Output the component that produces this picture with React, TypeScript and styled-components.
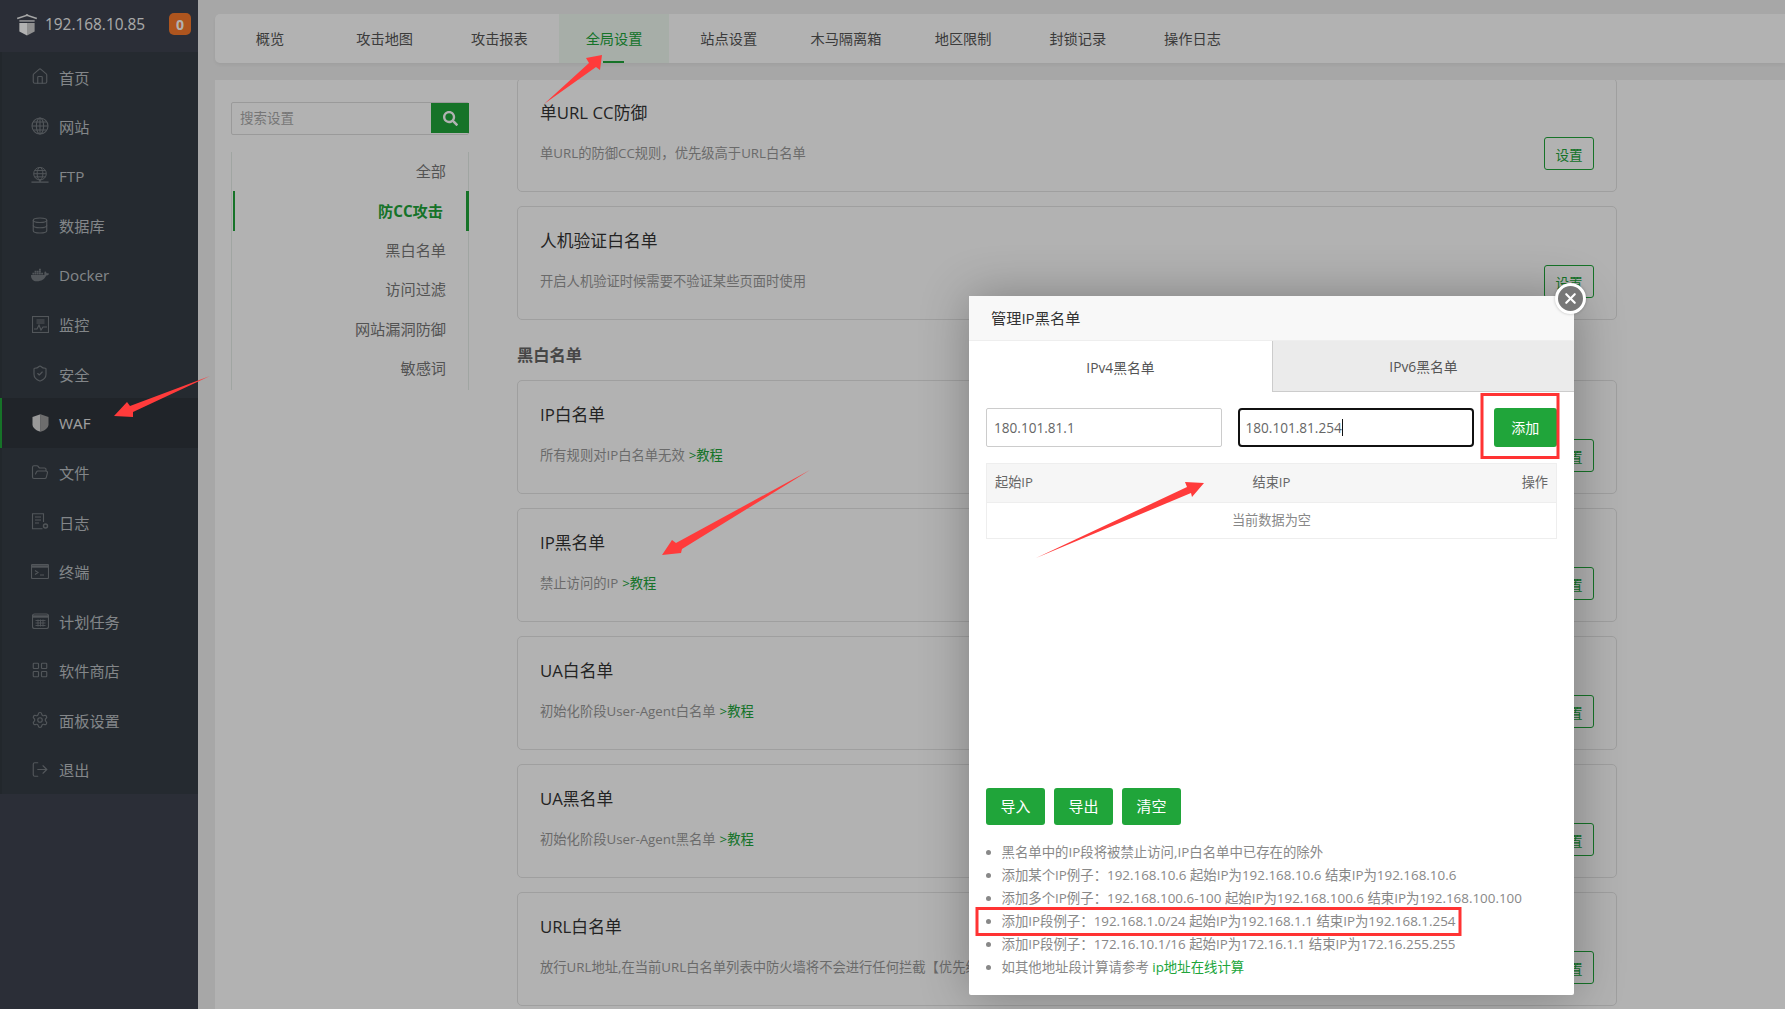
import * as React from "react";
import styled, { createGlobalStyle } from "styled-components";
import {
  House,
  Database,
  ShieldCheck,
  FolderOpen,
  LayoutGrid,
  Settings,
  LogOut,
  X
} from "lucide-react";
import { FaDocker, FaSearch } from "react-icons/fa";

const GREEN = "#20a53a";
const FONT = `"Open Sans", "Noto Sans CJK SC", sans-serif`;

const GlobalStyle = createGlobalStyle`
  html, body {
    margin: 0;
    padding: 0;
    overflow: hidden;
  }
  body {
    font-family: ${FONT};
    background: #f0f0f0;
  }
  * {
    box-sizing: border-box;
  }
`;

const Page = styled.div`
  position: relative;
  display: flex;
  width: 1785px;
  height: 1009px;
  overflow: hidden;
`;

const Sidebar = styled.aside`
  width: 198px;
  flex-shrink: 0;
  background: #3e4350;
`;

const Brand = styled.div`
  height: 52px;
  display: flex;
  align-items: center;
  padding: 0 7px 4px 16px;
  color: #f2f2f2;
  font-size: 15.4px;
`;

const BrandName = styled.span`
  margin-left: 7px;
  flex: 1;
`;

const Badge = styled.span`
  width: 22px;
  height: 22px;
  border-radius: 5px;
  background: #f97a2c;
  color: #fff;
  font-size: 14px;
  font-weight: 700;
  display: flex;
  align-items: center;
  justify-content: center;
`;

const Menu = styled.nav`
  background: #363d45;
`;

const MenuItem = styled.a<{ $active?: boolean }>`
  height: 49.47px;
  display: flex;
  align-items: center;
  gap: 10px;
  padding-left: 29px;
  border-left: 2px solid ${p => (p.$active ? GREEN : "#323840")};
  background: ${p => (p.$active ? "#2f343b" : "transparent")};
  color: ${p => (p.$active ? "#e6e6e6" : "#bcc0c4")};
  font-size: 15.2px;
`;

const MenuIcon = styled.span<{ $active?: boolean }>`
  width: 18px;
  height: 18px;
  flex-shrink: 0;
  display: flex;
  align-items: center;
  justify-content: center;
  color: ${p => (p.$active ? "#dcdcdc" : "#767c82")};
`;

const Main = styled.main`
  flex: 1;
  min-width: 0;
  display: flex;
  flex-direction: column;
  padding: 14px 0 0 17px;
`;

const TabBar = styled.div`
  height: 49px;
  flex-shrink: 0;
  display: flex;
  gap: 4.7px;
  background: #fff;
  border-radius: 5px 0 0 5px;
  box-shadow: 0 2px 4px rgba(0, 0, 0, 0.06);
`;

const Tab = styled.a<{ $active?: boolean }>`
  position: relative;
  min-width: 110px;
  padding: 0 22px 2px;
  display: flex;
  align-items: center;
  justify-content: center;
  font-size: 14.2px;
  color: ${p => (p.$active ? GREEN : "#555")};
  background: ${p => (p.$active ? "rgba(32, 165, 58, 0.07)" : "transparent")};

  &::after {
    content: "";
    display: ${p => (p.$active ? "block" : "none")};
    position: absolute;
    left: 44px;
    bottom: 0;
    width: 21px;
    height: 2px;
    background: ${GREEN};
  }
`;

const Panel = styled.div`
  flex: 1;
  min-height: 0;
  margin-top: 17px;
  padding-left: 16px;
  display: flex;
  gap: 48px;
  background: #fff;
  overflow: hidden;
`;

const SettingsNav = styled.div`
  width: 238px;
  flex-shrink: 0;
  padding-top: 22px;
`;

const SearchBox = styled.div`
  height: 33px;
  display: flex;
  border: 1px solid #ddd;
  border-radius: 2px;
`;

const SearchText = styled.span`
  flex: 1;
  padding-left: 8px;
  line-height: 31px;
  font-size: 13.5px;
  color: #aaa;
`;

const SearchButton = styled.span`
  width: 38px;
  height: 30px;
  margin-right: -1px;
  background: ${GREEN};
  color: #fff;
  display: flex;
  align-items: center;
  justify-content: center;
`;

const NavList = styled.ul`
  list-style: none;
  margin: 17px 0 0;
  padding: 0 0 1.5px;
  border-left: 1px solid #e6ece8;
  border-right: 1px solid #e6ece8;
`;

const NavItem = styled.li<{ $active?: boolean }>`
  height: 39.4px;
  display: flex;
  align-items: center;
  justify-content: flex-end;
  padding-right: ${p => (p.$active ? "23px" : "22px")};
  padding-bottom: 3px;
  font-size: 15.2px;
  font-weight: ${p => (p.$active ? 700 : 400)};
  color: ${p => (p.$active ? GREEN : "#777")};
  ${p =>
    p.$active
      ? `
    margin: 0 -1px 0 1px;
    border-left: 2px solid ${GREEN};
    border-right: 3px solid ${GREEN};
  `
      : ""}
`;

const CardColumn = styled.div`
  width: 1100px;
  flex-shrink: 0;
  margin-top: -2px;
  display: flex;
  flex-direction: column;
  gap: 14px;
`;

const SectionTitle = styled.h3`
  margin: 0;
  height: 32px;
  flex-shrink: 0;
  padding-top: 10px;
  font-size: 16.3px;
  line-height: 23px;
  font-weight: 700;
  color: #666;
`;

const Card = styled.div`
  height: 114px;
  flex-shrink: 0;
  display: flex;
  justify-content: space-between;
  padding: 23px 22px 0;
  border: 1px solid #e4e4e4;
  border-radius: 5px;
`;

const CardTitle = styled.div`
  font-size: 16.8px;
  line-height: 22px;
  color: #333;
`;

const CardDesc = styled.div`
  margin-top: 20px;
  font-size: 13.3px;
  line-height: 18px;
  color: #999;
  white-space: nowrap;
`;

const TutorialLink = styled.a`
  color: ${GREEN};
  margin-left: 4px;
`;

const OutlineButton = styled.button`
  align-self: flex-end;
  flex-shrink: 0;
  width: 50px;
  height: 33px;
  margin-bottom: 21px;
  padding: 0;
  background: #fff;
  border: 1px solid ${GREEN};
  border-radius: 3px;
  color: ${GREEN};
  font-family: ${FONT};
  font-size: 13.6px;
`;

const Mask = styled.div`
  position: absolute;
  inset: 0;
  background: rgba(0, 0, 0, 0.3);
`;

const Modal = styled.section`
  position: absolute;
  left: 969px;
  top: 296px;
  width: 605px;
  height: 699px;
  display: flex;
  flex-direction: column;
  background: #fff;
  border-radius: 2px;
  box-shadow: 1px 1px 50px rgba(0, 0, 0, 0.3);
`;

const ModalTitle = styled.header`
  height: 45px;
  flex-shrink: 0;
  padding-left: 22px;
  line-height: 45px;
  font-size: 15.2px;
  color: #333;
  background: #f8f8f8;
  border-bottom: 1px solid #eee;
`;

const CloseButton = styled.span`
  position: absolute;
  top: -13px;
  right: -12px;
  width: 31px;
  height: 31px;
  border-radius: 50%;
  background: #777;
  border: 3px solid #fff;
  color: #fff;
  display: flex;
  align-items: center;
  justify-content: center;
  box-shadow: 0 0 3px rgba(0, 0, 0, 0.25);
`;

const ModalTabs = styled.div`
  height: 51px;
  flex-shrink: 0;
  display: grid;
  grid-template-columns: 303px 1fr;
`;

const ModalTab = styled.div<{ $active?: boolean }>`
  display: flex;
  align-items: center;
  justify-content: center;
  font-size: 13.8px;
  color: #555;
  background: ${p => (p.$active ? "#fff" : "#ebebeb")};
  ${p => (p.$active ? "" : "border-left: 1px solid #ccc; border-bottom: 1px solid #ccc;")}
`;

const ModalBody = styled.div`
  flex: 1;
  min-height: 0;
  display: flex;
  flex-direction: column;
  padding: 16px 17px 16px 17px;
`;

const FormRow = styled.div`
  display: grid;
  grid-template-columns: 235.5px 236px 1fr;
  column-gap: 16px;
  height: 39px;
`;

const Field = styled.div<{ $focused?: boolean }>`
  display: flex;
  align-items: center;
  padding-left: ${p => (p.$focused ? "6px" : "7px")};
  font-size: 13.6px;
  color: #666;
  background: #fff;
  border: ${p => (p.$focused ? "2px solid #111" : "1px solid #ccc")};
  border-radius: ${p => (p.$focused ? "4px" : "2px")};
`;

const Caret = styled.span`
  width: 1px;
  height: 17px;
  background: #111;
`;

const AddButton = styled.button`
  margin-left: 4px;
  padding: 0 0 2px;
  background: ${GREEN};
  border: 0;
  border-radius: 3px;
  color: #fff;
  font-family: ${FONT};
  font-size: 14px;
`;

const Table = styled.div`
  margin-top: 16px;
  border: 1px solid #eee;
  font-size: 13.2px;
`;

const TableHead = styled.div`
  height: 39px;
  padding: 0 8px 3px;
  display: grid;
  grid-template-columns: 1fr auto 1fr;
  align-items: center;
  background: #f6f6f6;
  border-bottom: 1px solid #eee;
  color: #666;

  & > :last-child {
    justify-self: end;
  }
`;

const EmptyRow = styled.div`
  height: 35px;
  padding-bottom: 2px;
  display: flex;
  align-items: center;
  justify-content: center;
  color: #888;
`;

const Actions = styled.div`
  margin-top: auto;
  display: flex;
  gap: 9px;
`;

const SolidButton = styled.button`
  width: 59px;
  height: 37px;
  padding: 0 0 2px;
  background: ${GREEN};
  border: 0;
  border-radius: 3px;
  color: #fff;
  font-family: ${FONT};
  font-size: 15px;
`;

const Notes = styled.ul`
  margin: 16px 0 0;
  padding: 0 0 0 15.5px;
  font-size: 13.4px;
  color: #888;
`;

const Note = styled.li`
  height: 23px;
  line-height: 22px;
  white-space: nowrap;
`;

const NoteLink = styled.a`
  color: ${GREEN};
`;

const Annotations = styled.svg`
  position: absolute;
  left: 0;
  top: 0;
  pointer-events: none;
`;

const LogoIcon = () => (
  <svg width="22" height="24" viewBox="0 0 20 22">
    <path d="M8.6 3.2a1.4 1.4 0 0 1 2.8 0" fill="#ddd" />
    <path d="M1 6l9-3 9 3" stroke="#eee" strokeWidth="1.3" fill="none" />
    <path d="M3 8.2h14" stroke="#eee" strokeWidth="1.2" />
    <path d="M3 10h7v11.5L3 17.8z" fill="#fff" />
    <path d="M10 10h7v7.8l-7 3.7z" fill="#cfcfcf" />
  </svg>
);

const GlobeIcon = () => (
  <svg width="18" height="18" viewBox="0 0 18 18" fill="none" stroke="currentColor" strokeWidth="1.1">
    <circle cx="9" cy="9" r="8" />
    <ellipse cx="9" cy="9" rx="3.6" ry="8" />
    <path d="M9 1v16M1 9h16M2.4 5h13.2M2.4 13h13.2" />
  </svg>
);

const FtpIcon = () => (
  <svg width="20" height="19" viewBox="0 0 20 19" fill="none" stroke="currentColor" strokeWidth="1.1">
    <circle cx="10" cy="7.5" r="7" />
    <ellipse cx="10" cy="7.5" rx="3.2" ry="7" />
    <path d="M3 7.5h14M4 4h12M4 11h12" />
    <path d="M0.5 16.8h19M10 14.5v3" strokeWidth="1.5" />
  </svg>
);

const MonitorIcon = () => (
  <svg width="17" height="17" viewBox="0 0 17 17" fill="none" stroke="currentColor" strokeWidth="1.1">
    <rect x="0.5" y="0.5" width="16" height="16" />
    <path d="M2 13h3l2-4 2 5 2-3h4" />
    <rect x="4.5" y="3" width="8" height="5" fill="currentColor" opacity="0.5" stroke="none" />
  </svg>
);

const WafIcon = () => (
  <svg width="17" height="18" viewBox="0 0 17 18">
    <path d="M8.5 0.2L0.5 3v7.5c0 3.5 4 6.2 8 7.3z" fill="currentColor" />
    <path d="M8.5 0.2l8 2.8v7.5c0 3.5-4 6.2-8 7.3z" fill="#9d9d9d" />
  </svg>
);

const LogIcon = () => (
  <svg width="18" height="17" viewBox="0 0 18 17" fill="none" stroke="currentColor" strokeWidth="1.1">
    <path d="M12.5 9V0.8H1.5v15h10" />
    <path d="M4 4h6M4 7h6M4 10h4" />
    <circle cx="14.5" cy="13" r="2" strokeWidth="1.4" />
  </svg>
);

const TerminalIcon = () => (
  <svg width="18" height="15" viewBox="0 0 18 15" fill="none" stroke="currentColor" strokeWidth="1.1">
    <rect x="0.5" y="0.5" width="17" height="14" rx="1" />
    <path d="M0.5 2.5h17" strokeWidth="2.4" />
    <path d="M4 6.5l3 2-3 2M9 11h4" />
  </svg>
);

const CalendarIcon = () => (
  <svg width="17" height="16" viewBox="0 0 17 16" fill="none" stroke="currentColor" strokeWidth="1.1">
    <rect x="0.5" y="1" width="16" height="14.5" rx="2" />
    <path d="M0.5 3.5h16" strokeWidth="2.4" />
    <path d="M3.5 7.5h10M3.5 10h10M3.5 12.5h10M6 6.5v7M8.5 6.5v7M11 6.5v7" strokeWidth="0.9" />
  </svg>
);

const MENU: { label: string; icon: React.ReactNode; active?: boolean }[] = [
  { label: "首页", icon: <House size={21} strokeWidth={1.5} /> },
  { label: "网站", icon: <GlobeIcon /> },
  { label: "FTP", icon: <FtpIcon /> },
  { label: "数据库", icon: <Database size={21} strokeWidth={1.5} /> },
  { label: "Docker", icon: <FaDocker size={20} /> },
  { label: "监控", icon: <MonitorIcon /> },
  { label: "安全", icon: <ShieldCheck size={21} strokeWidth={1.5} /> },
  { label: "WAF", icon: <WafIcon />, active: true },
  { label: "文件", icon: <FolderOpen size={21} strokeWidth={1.5} /> },
  { label: "日志", icon: <LogIcon /> },
  { label: "终端", icon: <TerminalIcon /> },
  { label: "计划任务", icon: <CalendarIcon /> },
  { label: "软件商店", icon: <LayoutGrid size={22} strokeWidth={1.5} /> },
  { label: "面板设置", icon: <Settings size={20} strokeWidth={1.5} /> },
  { label: "退出", icon: <LogOut size={21} strokeWidth={1.5} /> }
];

const TABS = ["概览", "攻击地图", "攻击报表", "全局设置", "站点设置", "木马隔离箱", "地区限制", "封锁记录", "操作日志"];

const SETTINGS_NAV = ["全部", "防CC攻击", "黑白名单", "访问过滤", "网站漏洞防御", "敏感词"];

const NOTES = [
  "黑名单中的IP段将被禁止访问,IP白名单中已存在的除外",
  "添加某个IP例子：192.168.10.6 起始IP为192.168.10.6 结束IP为192.168.10.6",
  "添加多个IP例子：192.168.100.6-100 起始IP为192.168.100.6 结束IP为192.168.100.100",
  "添加IP段例子：192.168.1.0/24 起始IP为192.168.1.1 结束IP为192.168.1.254",
  "添加IP段例子：172.16.10.1/16 起始IP为172.16.1.1 结束IP为172.16.255.255"
];

const ARROWS = [
  "544,104 589,63 586,58 602,55 600,70 596,67",
  "210,376 130,406 127,402 114,416 133,417 133,412",
  "810,470 676,543 672,540 662,555 681,553 682,549",
  "1036,558 1187,487 1185,482 1204,483 1192,497 1191,493"
];

function SettingCard({ title, desc, tutorial }: { title: string; desc: string; tutorial?: boolean }) {
  return (
    <Card>
      <div>
        <CardTitle>{title}</CardTitle>
        <CardDesc>
          {desc}
          {tutorial && <TutorialLink>&gt;教程</TutorialLink>}
        </CardDesc>
      </div>
      <OutlineButton>设置</OutlineButton>
    </Card>
  );
}

export default function App() {
  return (
    <Page>
      <GlobalStyle />
      <Sidebar>
        <Brand>
          <LogoIcon />
          <BrandName>192.168.10.85</BrandName>
          <Badge>0</Badge>
        </Brand>
        <Menu>
          {MENU.map(item => (
            <MenuItem key={item.label} $active={item.active}>
              <MenuIcon $active={item.active}>{item.icon}</MenuIcon>
              {item.label}
            </MenuItem>
          ))}
        </Menu>
      </Sidebar>

      <Main>
        <TabBar>
          {TABS.map(tab => (
            <Tab key={tab} $active={tab === "全局设置"}>
              {tab}
            </Tab>
          ))}
        </TabBar>
        <Panel>
          <SettingsNav>
            <SearchBox>
              <SearchText>搜索设置</SearchText>
              <SearchButton>
                <FaSearch size={15} />
              </SearchButton>
            </SearchBox>
            <NavList>
              {SETTINGS_NAV.map(item => (
                <NavItem key={item} $active={item === "防CC攻击"}>
                  {item}
                </NavItem>
              ))}
            </NavList>
          </SettingsNav>
          <CardColumn>
            <SettingCard title="单URL CC防御" desc="单URL的防御CC规则，优先级高于URL白名单" />
            <SettingCard title="人机验证白名单" desc="开启人机验证时候需要不验证某些页面时使用" />
            <SectionTitle>黑白名单</SectionTitle>
            <SettingCard title="IP白名单" desc="所有规则对IP白名单无效" tutorial />
            <SettingCard title="IP黑名单" desc="禁止访问的IP" tutorial />
            <SettingCard title="UA白名单" desc="初始化阶段User-Agent白名单" tutorial />
            <SettingCard title="UA黑名单" desc="初始化阶段User-Agent黑名单" tutorial />
            <SettingCard
              title="URL白名单"
              desc="放行URL地址,在当前URL白名单列表中防火墙将不会进行任何拦截【优先级"
            />
          </CardColumn>
        </Panel>
      </Main>

      <Mask />

      <Modal>
        <ModalTitle>管理IP黑名单</ModalTitle>
        <CloseButton>
          <X size={17} strokeWidth={3} />
        </CloseButton>
        <ModalTabs>
          <ModalTab $active>IPv4黑名单</ModalTab>
          <ModalTab>IPv6黑名单</ModalTab>
        </ModalTabs>
        <ModalBody>
          <FormRow>
            <Field>180.101.81.1</Field>
            <Field $focused>
              180.101.81.254
              <Caret />
            </Field>
            <AddButton>添加</AddButton>
          </FormRow>
          <Table>
            <TableHead>
              <span>起始IP</span>
              <span>结束IP</span>
              <span>操作</span>
            </TableHead>
            <EmptyRow>当前数据为空</EmptyRow>
          </Table>
          <Actions>
            <SolidButton>导入</SolidButton>
            <SolidButton>导出</SolidButton>
            <SolidButton>清空</SolidButton>
          </Actions>
          <Notes>
            {NOTES.map(note => (
              <Note key={note}>{note}</Note>
            ))}
            <Note>
              如其他地址段计算请参考 <NoteLink>ip地址在线计算</NoteLink>
            </Note>
          </Notes>
        </ModalBody>
      </Modal>

      <Annotations width="1785" height="1009" viewBox="0 0 1785 1009">
        {ARROWS.map(points => (
          <polygon key={points} points={points} fill="#ff3b3b" />
        ))}
        <rect x="1482" y="394.5" width="76" height="63" fill="none" stroke="#ff3333" strokeWidth="3" />
        <rect x="977" y="908.5" width="483" height="26" fill="none" stroke="#ff3333" strokeWidth="3" />
      </Annotations>
    </Page>
  );
}
